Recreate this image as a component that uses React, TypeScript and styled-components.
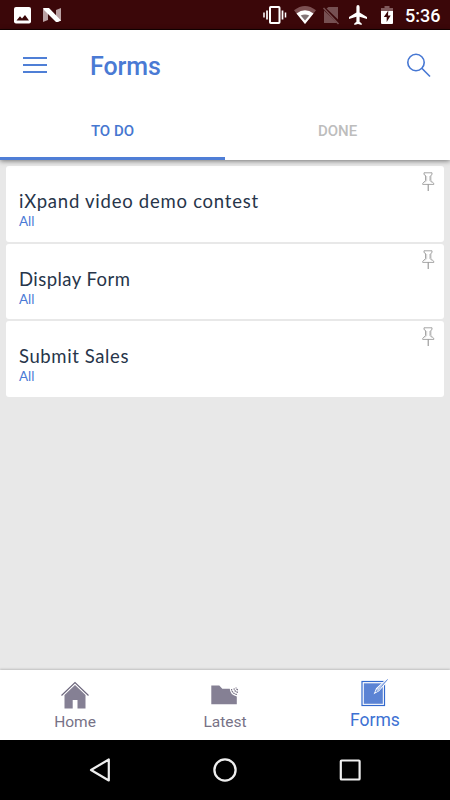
import React from "react";
import styled, { createGlobalStyle } from "styled-components";

const blue = "#3d71d3";
const slate = "#858094";

const GlobalStyle = createGlobalStyle`
  * { box-sizing: border-box; }
  body { margin: 0; font-family: Roboto, sans-serif; }
  svg { display: block; flex: none; }
`;

const Screen = styled.div`
  width: 450px;
  height: 800px;
  display: flex;
  flex-direction: column;
  background: #e8e8e8;
  overflow: hidden;
`;

const StatusBar = styled.div`
  height: 30px;
  flex: none;
  display: flex;
  justify-content: space-between;
  padding: 0 10px 0 14px;
  background: #3b0709;
  border-bottom: 1px solid #160001;
`;

const StatusGroup = styled.div<{ $gap: number }>`
  display: flex;
  align-items: center;
  gap: ${(p) => p.$gap}px;
  height: 30px;
`;

const Clock = styled.span`
  width: 35px;
  margin-left: 6px;
  padding-top: 2px;
  color: #fff;
  font-size: 18px;
  font-weight: 500;
  line-height: 28px;
  white-space: nowrap;
`;

const Header = styled.header`
  height: 130px;
  flex: none;
  display: flex;
  flex-direction: column;
  background: #fff;
  box-shadow: 0 1px 5px rgba(0, 0, 0, 0.5);
  z-index: 1;
`;

const Toolbar = styled.div`
  height: 70px;
  display: flex;
  align-items: center;
  padding: 0 19px 0 23px;
`;

const IconButton = styled.button`
  padding: 0;
  border: 0;
  background: none;
`;

const PageTitle = styled.h1`
  flex: 1;
  margin: 3px 0 0 43px;
  color: #4a7ad4;
  font-size: 25px;
  font-weight: 500;
  line-height: 31px;
  letter-spacing: -0.1px;
`;

const Tabs = styled.div`
  flex: 1;
  display: flex;
`;

const Tab = styled.button<{ $active?: boolean }>`
  flex: 1;
  padding: 5px 0 0;
  border: 0;
  border-bottom: 3px solid ${(p) => (p.$active ? "#4f7ed6" : "transparent")};
  background: none;
  color: ${(p) => (p.$active ? "#4677d0" : "#bdbdbd")};
  font: 500 15px/20px Roboto, sans-serif;
`;

const List = styled.main`
  flex: 1;
  display: flex;
  flex-direction: column;
  gap: 2px;
  padding: 6px 6px 0;
`;

const Card = styled.article`
  height: 75.5px;
  display: flex;
  justify-content: space-between;
  padding: 6px 9px 0 13px;
  background: #fff;
  border-radius: 3px;
`;

const CardText = styled.div`
  padding-top: 18px;
  font-family: Lato, sans-serif;
`;

const CardTitle = styled.h2<{ $spacing: number }>`
  margin: 0;
  color: #27354a;
  font-size: 18.5px;
  font-weight: 400;
  line-height: 22px;
  letter-spacing: ${(p) => p.$spacing}px;
`;

const Audience = styled.p`
  margin: 0;
  color: #4a7ad6;
  font-size: 13.5px;
  line-height: 18px;
`;

const BottomNav = styled.nav`
  height: 70px;
  flex: none;
  display: flex;
  background: #fff;
  box-shadow: 0 -1px 2px rgba(0, 0, 0, 0.18);
`;

const NavItem = styled.a<{ $active?: boolean }>`
  flex: 1;
  display: flex;
  flex-direction: column;
  align-items: center;
  padding-top: ${(p) => (p.$active ? 8 : 10)}px;
  color: ${(p) => (p.$active ? blue : "#777286")};
  font-size: ${(p) => (p.$active ? 17.5 : 15.5)}px;
  line-height: 20px;
`;

const NavLabel = styled.span`
  margin-top: 2px;
`;

const SystemBar = styled.div`
  height: 60px;
  flex: none;
  display: flex;
  align-items: center;
  justify-content: space-between;
  padding: 0 88px;
  background: #000;
`;

const PictureIcon = () => (
  <svg width="17" height="17" viewBox="0 0 17 17">
    <path d="M2 0h13q2 0 2 2v12.500q0 2-2 2H2q-2 0-2-2V2Q0 0 2 0Z" fill="#fff" />
    <path d="M2.500 13.500 6 9.200l2 2.300L11 8l4 5.500Z" fill="#3b0709" />
  </svg>
);

const NougatIcon = () => (
  <svg width="20" height="16" viewBox="0 0 20 16">
    <path d="M1 1h5v12l-5 2ZM14 3l5-2v13h-5Z" fill="#b9a0a2" />
    <path d="M1.500 1H7l12 12.500-3 1.500h-2L2 3Z" fill="#fff" />
  </svg>
);

const VibrateIcon = () => (
  <svg width="24" height="20" viewBox="0 0 24 20" fill="none" stroke="#fff">
    <rect x="7" y="2" width="9.500" height="16" rx=".8" strokeWidth="2" />
    <path d="M4 5.500v9M19.500 5.500v9" strokeWidth="1.700" />
    <path d="M1 7.500v5M22.500 7.500v5" strokeWidth="1.500" />
  </svg>
);

const WifiIcon = () => (
  <svg width="24" height="20" viewBox="0 0 24 20">
    <path d="M1 5.300Q12-3.300 23 5.300L12 19Z" fill="#7c5052" />
    <path d="M3.500 8.500Q12 2 20.500 8.500L12 19Z" fill="#fff" />
    <path d="M7.700 10.500Q12 8.500 16.300 10.500L12 15.500Z" fill="#827577" />
  </svg>
);

const NoSimIcon = () => (
  <svg width="20.5" height="20" viewBox="0 0 20.5 20">
    <path d="M6.500 2H16v12.500L4.500 3.500ZM2 5.500 15.200 18H2Z" fill="#765052" />
    <path d="m1.500 3 15 16" stroke="#765052" strokeWidth="1.500" />
  </svg>
);

const AirplaneIcon = () => (
  <svg width="26" height="22" viewBox="0 0 26 22">
    <path d="M10 1q1.600 0 1.600 2v5.500L19 13v2l-7.400-2.200v5L13.700 19.600V21L10 20l-3.700 1v-1.400l2.100-1.800v-5L1 15v-2l7.400-4.500V3q0-2 1.600-2Z" fill="#fff" />
  </svg>
);

const BatteryIcon = () => (
  <svg width="14" height="20" viewBox="0 0 14 20">
    <path d="M4.500 1h5v2H13v4H1V3h3.500Z" fill="#80595b" />
    <path d="M1 6h12v12q0 1-1 1H2q-1 0-1-1Z" fill="#fff" />
    <path d="M8.300 5.500 3.800 12h2.900v5l4-6.500H8Z" fill="#3b0709" />
  </svg>
);

const MenuIcon = () => (
  <svg width="24" height="20" viewBox="0 0 24 20">
    <path d="M0 3h24M0 10h24M0 17h24" stroke="#4f7fd6" strokeWidth="2.200" />
  </svg>
);

const SearchIcon = () => (
  <svg width="25" height="25" viewBox="0 0 25 25" fill="none" stroke="#4677d3" strokeWidth="1.600">
    <circle cx="10" cy="9.500" r="8.200" />
    <path d="m15.800 15.300 8.200 8.200" />
  </svg>
);

const PinIcon = () => (
  <svg width="14" height="20" viewBox="0 0 14 20" fill="none" stroke="#888" strokeWidth=".75">
    <path d="M3 .8h8v1.800l-1.200.8v5.200l3 2.800v1H1.700v-1l2.800-2.800V3.400L3 2.600Z" />
    <path d="M5.700 4v4.500l-2 2.200M8.700 4v4.500l2 2.200" strokeWidth=".4" />
    <path d="M7.200 12.500V19" strokeWidth="1" />
  </svg>
);

const HomeIcon = () => (
  <svg width="30" height="30" viewBox="0 0 30 30">
    <path d="m1.500 15.500 13.500-13 13.500 13" fill="none" stroke="#6d677d" strokeWidth="1.200" />
    <path d="M4.500 15 15 5l10.500 10v13.500h-8V20h-4.800v8.500H4.500Z" fill={slate} />
  </svg>
);

const LatestIcon = () => (
  <svg width="30" height="30" viewBox="0 0 30 30">
    <path d="M1.300 5.500h8l3 3.200h7.500q0 5.800 7 7.800v7.800H1.300Z" fill={slate} />
    <g fill="none" stroke="#777184" strokeWidth="1.200" strokeDasharray="1.700 .6">
      <path d="M27 14.500q-5-1-5.500-5.500" />
      <path d="M28 12.300q-3.500-.5-4-4" />
      <path d="M28 9.800q-1.700-.3-2-2.300" />
    </g>
  </svg>
);

const FormsIcon = () => (
  <svg width="30" height="30" viewBox="0 0 30 30">
    <rect x="2" y="3.500" width="22.500" height="24" fill="#fff" stroke="#3269ce" strokeWidth="1.200" />
    <path d="M3.800 5.300h19V25.800h-19Z" fill="#5b83d4" />
    <path d="m15.200 14.500 1.500-3.800L27 1.300l1 .8-9.500 10.500Z" fill="#fff" stroke="#fff" strokeWidth="1.600" />
    <path d="m15.800 13.800 1.600-2.800L27.500 1.500 18.400 12.400Z" fill="#fff" stroke="#6e93dc" strokeWidth=".9" />
  </svg>
);

const BackIcon = () => (
  <svg width="24" height="26" viewBox="0 0 24 26">
    <path d="M20.800 2.500v21L3 13Z" fill="none" stroke="#eee" strokeWidth="2.200" strokeLinejoin="round" />
  </svg>
);

const HomeKeyIcon = () => (
  <svg width="26" height="26" viewBox="0 0 26 26">
    <circle cx="13" cy="13" r="10.600" fill="none" stroke="#eee" strokeWidth="2.300" />
  </svg>
);

const RecentsIcon = () => (
  <svg width="24" height="26" viewBox="0 0 24 26">
    <rect x="2.800" y="3.500" width="18.800" height="19" rx=".8" fill="none" stroke="#eee" strokeWidth="2.200" />
  </svg>
);

const forms = [
  { title: "iXpand video demo contest", spacing: 0.75 },
  { title: "Display Form", spacing: 0.45 },
  { title: "Submit Sales", spacing: 0.6 },
];

export default function App() {
  return (
    <>
      <GlobalStyle />
      <Screen>
        <StatusBar>
          <StatusGroup $gap={11}>
            <PictureIcon />
            <NougatIcon />
          </StatusGroup>
          <StatusGroup $gap={5.5}>
            <VibrateIcon />
            <WifiIcon />
            <NoSimIcon />
            <AirplaneIcon />
            <BatteryIcon />
            <Clock>5:36</Clock>
          </StatusGroup>
        </StatusBar>
        <Header>
          <Toolbar>
            <IconButton aria-label="Menu"><MenuIcon /></IconButton>
            <PageTitle>Forms</PageTitle>
            <IconButton aria-label="Search"><SearchIcon /></IconButton>
          </Toolbar>
          <Tabs>
            <Tab $active>TO DO</Tab>
            <Tab>DONE</Tab>
          </Tabs>
        </Header>
        <List>
          {forms.map((form) => (
            <Card key={form.title}>
              <CardText>
                <CardTitle $spacing={form.spacing}>{form.title}</CardTitle>
                <Audience>All</Audience>
              </CardText>
              <PinIcon />
            </Card>
          ))}
        </List>
        <BottomNav>
          <NavItem><HomeIcon /><NavLabel>Home</NavLabel></NavItem>
          <NavItem><LatestIcon /><NavLabel>Latest</NavLabel></NavItem>
          <NavItem $active><FormsIcon /><NavLabel>Forms</NavLabel></NavItem>
        </BottomNav>
        <SystemBar>
          <BackIcon />
          <HomeKeyIcon />
          <RecentsIcon />
        </SystemBar>
      </Screen>
    </>
  );
}
